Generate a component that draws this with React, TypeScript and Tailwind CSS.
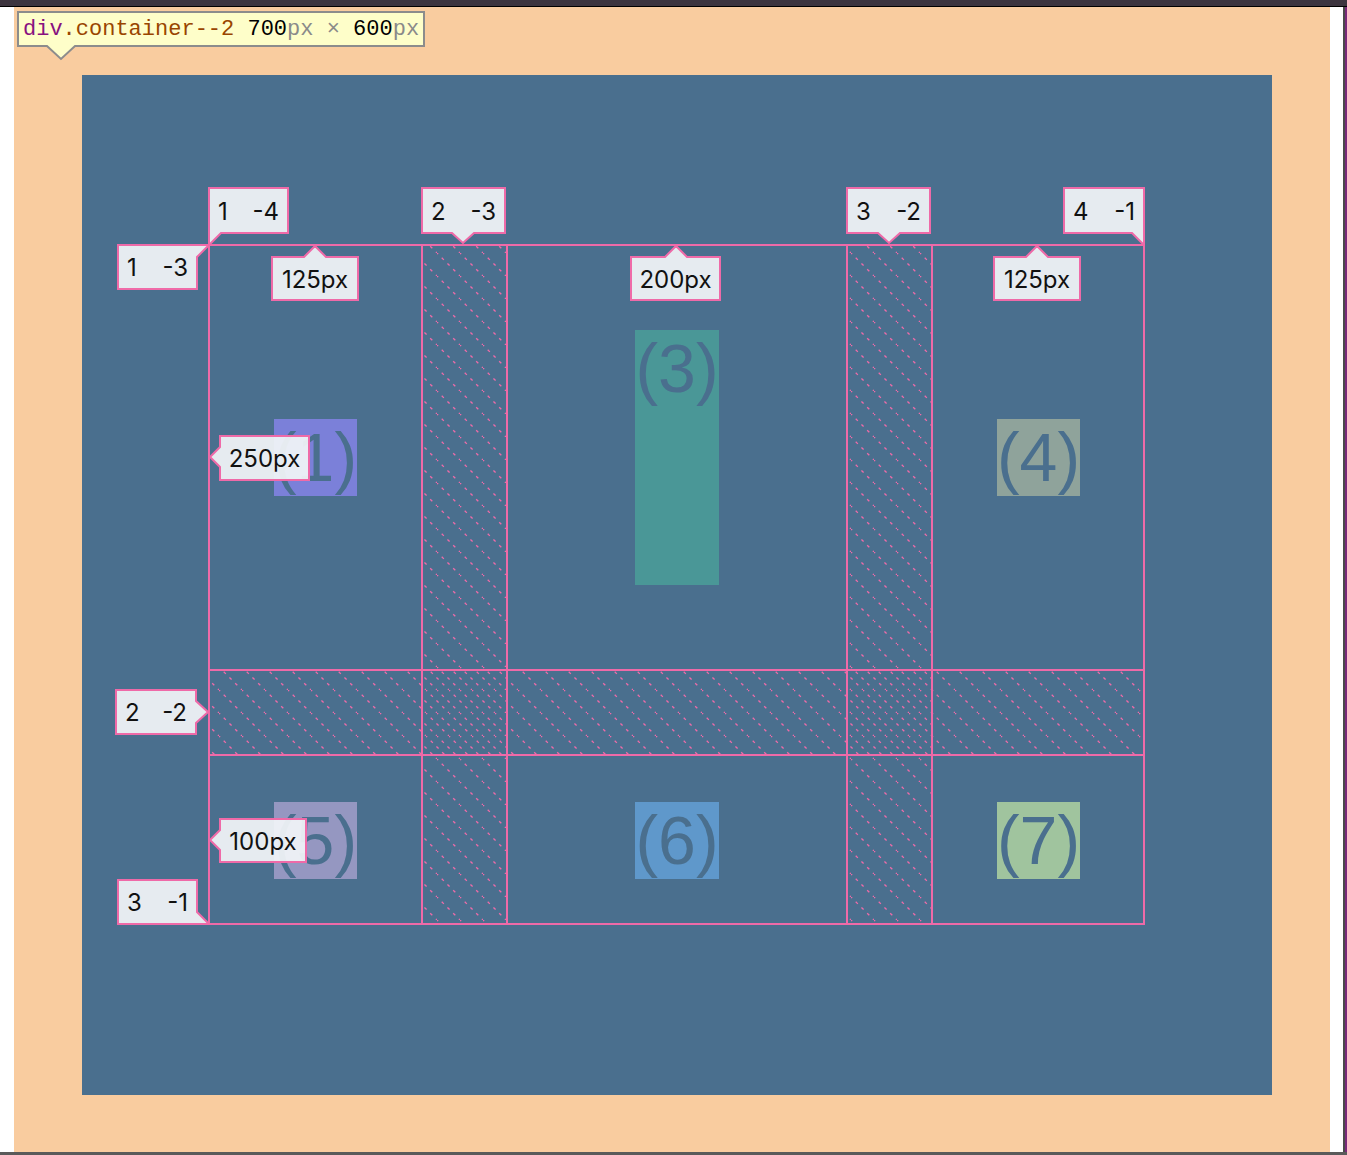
import React from 'react';

const PINK = '#ef6aa8';
const OX = 82;
const OY = 75;

type Notch =
  | { kind: 'up'; at: number }
  | { kind: 'down'; at: number }
  | { kind: 'left'; at: number }
  | { kind: 'right'; at: number }
  | { kind: 'bl' }
  | { kind: 'tr' }
  | { kind: 'br' }
  | { kind: 'brSide' };

function shape(w: number, h: number, n: Notch): string {
  let p: number[][] = [];
  switch (n.kind) {
    case 'down':
      p = [[0, 0], [w, 0], [w, h], [n.at + 11, h], [n.at, h + 10], [n.at - 11, h], [0, h]];
      break;
    case 'up':
      p = [[0, 0], [n.at - 11, 0], [n.at, -11], [n.at + 11, 0], [w, 0], [w, h], [0, h]];
      break;
    case 'left':
      p = [[0, 0], [w, 0], [w, h], [0, h], [0, n.at + 10], [-10, n.at], [0, n.at - 10]];
      break;
    case 'right':
      p = [[0, 0], [w, 0], [w, n.at - 11], [w + 12, n.at], [w, n.at + 11], [w, h], [0, h]];
      break;
    case 'bl':
      p = [[0, 0], [w, 0], [w, h], [12, h], [0, h + 12]];
      break;
    case 'tr':
      p = [[0, 0], [w + 12, 0], [w, 12], [w, h], [0, h]];
      break;
    case 'br':
      p = [[0, 0], [w, 0], [w, h + 12], [w - 12, h], [0, h]];
      break;
    case 'brSide':
      p = [[0, 0], [w, 0], [w, h - 12], [w + 12, h], [0, h]];
      break;
  }
  return p.map((q) => q.join(',')).join(' ');
}

interface LabelProps {
  x: number;
  y: number;
  w: number;
  h: number;
  notch: Notch;
  a: string;
  b?: string;
}

// page coords in, positioned against the container
const Label: React.FC<LabelProps> = ({ x, y, w, h, notch, a, b }) => {
  return (
    <div className="absolute" style={{ left: x - OX, top: y - OY, width: w, height: h }}>
      <svg className="absolute inset-0 overflow-visible" width={w} height={h}>
        <polygon points={shape(w, h, notch)} fill="rgba(240,243,246,0.94)" stroke={PINK} strokeWidth="2" strokeLinejoin="miter" />
      </svg>
      <div
        className={`relative flex h-full items-center pt-[2px] px-[9px] text-[24px] text-[#111] font-['Inter',sans-serif] ${
          b ? 'justify-between' : 'justify-center'
        }`}
      >
        <span>{a}</span>
        {b && <span>{b}</span>}
      </div>
    </div>
  );
};

const items = [
  { n: '(1)', col: 'col-start-1', row: 'row-start-1', bg: 'bg-[#7b80d9]', extra: 'self-center' },
  { n: '(3)', col: 'col-start-3', row: 'row-start-1', bg: 'bg-[#4a9797]', extra: 'self-start mt-[85px] h-[255px]' },
  { n: '(4)', col: 'col-start-5', row: 'row-start-1', bg: 'bg-[#8fa39b]', extra: 'self-center' },
  { n: '(5)', col: 'col-start-1', row: 'row-start-3', bg: 'bg-[#9597c1]', extra: 'self-center' },
  { n: '(6)', col: 'col-start-3', row: 'row-start-3', bg: 'bg-[#5f98cb]', extra: 'self-center' },
  { n: '(7)', col: 'col-start-5', row: 'row-start-3', bg: 'bg-[#a0c49e]', extra: 'self-center' },
];

const vLines = [209, 422, 507, 847, 932, 1144];
const hLines = [245, 670, 755, 924];

function GridOverlay() {
  return (
    <svg className="pointer-events-none absolute inset-0" width={1190} height={1020}>
      <defs>
        <pattern id="hatchA" patternUnits="userSpaceOnUse" width="23" height="23">
          <path d="M-1,-1 L24,24" stroke={PINK} strokeWidth="1.3" strokeDasharray="3 5.1" />
        </pattern>
        <pattern id="hatchB" patternUnits="userSpaceOnUse" width="23" height="23" patternTransform="translate(12,0)">
          <path d="M-1,-1 L24,24" stroke={PINK} strokeWidth="1.3" strokeDasharray="3 5.1" />
        </pattern>
      </defs>
      <g transform={`translate(${-OX},${-OY})`}>
        <rect x={422} y={245} width={85} height={679} fill="url(#hatchA)" />
        <rect x={847} y={245} width={85} height={679} fill="url(#hatchA)" />
        <rect x={209} y={670} width={935} height={85} fill="url(#hatchB)" />
        {vLines.map((x) => (
          <rect key={'v' + x} x={x - 1} y={244} width={2} height={681} fill={PINK} />
        ))}
        {hLines.map((y) => (
          <rect key={'h' + y} x={208} y={y - 1} width={937} height={2} fill={PINK} />
        ))}
      </g>
    </svg>
  );
}

function Tooltip() {
  const w = 406;
  const h = 34;
  const pts = [[0, 0], [w, 0], [w, h], [57, h], [43, h + 13], [29, h], [0, h]].map((q) => q.join(',')).join(' ');
  return (
    <div className="absolute left-[18px] top-[12px] h-[34px] w-[406px]">
      <svg className="absolute inset-0 overflow-visible" width={w} height={h}>
        <polygon points={pts} fill="#fefec9" stroke="#8c8c8c" strokeWidth="2" />
      </svg>
      <div className="relative flex h-full items-center pl-[5px] pt-[1px] font-['Liberation_Mono',monospace] text-[22px] leading-none whitespace-pre">
        <span className="text-[#881280]">div</span>
        <span className="text-[#994500]">.container--2</span>
        <span className="text-black"> 700</span>
        <span className="text-[#8a8a8a]">px × </span>
        <span className="text-black">600</span>
        <span className="text-[#8a8a8a]">px</span>
      </div>
    </div>
  );
}

export default function App() {
  return (
    <div className="relative h-[1155px] w-[1347px] overflow-hidden bg-white">
      <div className="h-[7px] border-b border-black bg-[#3d353f]" />
      <div className="flex h-[1145px]">
        <div className="w-[14px] bg-white" />
        <div className="w-[1316px] bg-[#f9cc9f] pl-[68px] pt-[68px]">
          <div className="relative h-[1020px] w-[1190px] bg-[#4a6f8e] pl-[127px] pt-[170px]">
            <div className="grid grid-cols-[213px_85px_340px_85px_213px] grid-rows-[425px_85px_170px]">
              {items.map((it) => (
                <div
                  key={it.n}
                  className={`${it.col} ${it.row} ${it.bg} ${it.extra} justify-self-center font-['Liberation_Sans',sans-serif] text-[68px] leading-[77px] text-[#4a6f8e]`}
                >
                  {it.n}
                </div>
              ))}
            </div>
            <GridOverlay />
            <Label x={209} y={188} w={79} h={45} notch={{ kind: 'bl' }} a="1" b="-4" />
            <Label x={422} y={188} w={83} h={45} notch={{ kind: 'down', at: 41 }} a="2" b="-3" />
            <Label x={847} y={188} w={83} h={45} notch={{ kind: 'down', at: 42 }} a="3" b="-2" />
            <Label x={1064} y={188} w={80} h={45} notch={{ kind: 'br' }} a="4" b="-1" />
            <Label x={118} y={245} w={79} h={44} notch={{ kind: 'tr' }} a="1" b="-3" />
            <Label x={272} y={257} w={86} h={43} notch={{ kind: 'up', at: 43 }} a="125px" />
            <Label x={631} y={257} w={89} h={43} notch={{ kind: 'up', at: 45 }} a="200px" />
            <Label x={994} y={257} w={86} h={43} notch={{ kind: 'up', at: 43 }} a="125px" />
            <Label x={220} y={436} w={89} h={44} notch={{ kind: 'left', at: 21 }} a="250px" />
            <Label x={116} y={690} w={80} h={44} notch={{ kind: 'right', at: 22 }} a="2" b="-2" />
            <Label x={220} y={819} w={86} h={43} notch={{ kind: 'left', at: 21 }} a="100px" />
            <Label x={118} y={880} w={79} h={44} notch={{ kind: 'brSide' }} a="3" b="-1" />
          </div>
        </div>
        <div className="w-[13px] bg-white" />
        <div className="w-[2px] bg-[#4a4a4a]" />
        <div className="w-[2px] bg-[#7a2a7a]" />
      </div>
      <div className="h-[3px] bg-[#5a5a5a]" />
      <Tooltip />
    </div>
  );
}
